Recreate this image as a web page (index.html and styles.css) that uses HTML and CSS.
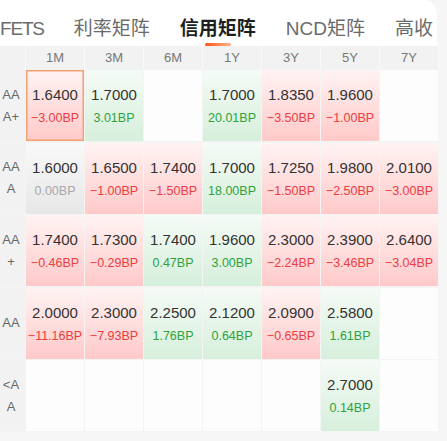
FILE: index.html
```html
<!DOCTYPE html>
<html lang="zh">
<head>
<meta charset="utf-8">
<link rel="stylesheet" href="styles.css">
</head>
<body>
<div class="page">
  <div class="tabs">
    <div class="tab-row">
      <span class="tab latin">FETS</span>
      <span class="tab">利率矩阵</span>
      <span class="tab active">信用矩阵</span>
      <span class="tab">NCD矩阵</span>
      <span class="tab">高收</span>
    </div>
  </div>
  <div class="head">
    <div class="hc"></div>
    <div class="hc">1M</div>
    <div class="hc">3M</div>
    <div class="hc">6M</div>
    <div class="hc">1Y</div>
    <div class="hc">3Y</div>
    <div class="hc">5Y</div>
    <div class="hc">7Y</div>
  </div>
  <div class="grid">
    <div class="lab">AA<br>A+</div>
    <div class="cell down sel"><span class="num">1.6400</span><span class="bp">−3.00BP</span></div>
    <div class="cell up"><span class="num">1.7000</span><span class="bp">3.01BP</span></div>
    <div class="cell empty"></div>
    <div class="cell up"><span class="num">1.7000</span><span class="bp">20.01BP</span></div>
    <div class="cell down"><span class="num">1.8350</span><span class="bp">−3.50BP</span></div>
    <div class="cell down"><span class="num">1.9600</span><span class="bp">−1.00BP</span></div>
    <div class="cell empty"></div>

    <div class="lab">AA<br>A</div>
    <div class="cell flat"><span class="num">1.6000</span><span class="bp">0.00BP</span></div>
    <div class="cell down"><span class="num">1.6500</span><span class="bp">−1.00BP</span></div>
    <div class="cell down"><span class="num">1.7400</span><span class="bp">−1.50BP</span></div>
    <div class="cell up"><span class="num">1.7000</span><span class="bp">18.00BP</span></div>
    <div class="cell down"><span class="num">1.7250</span><span class="bp">−1.50BP</span></div>
    <div class="cell down"><span class="num">1.9800</span><span class="bp">−2.50BP</span></div>
    <div class="cell down"><span class="num">2.0100</span><span class="bp">−3.00BP</span></div>

    <div class="lab">AA<br>+</div>
    <div class="cell down"><span class="num">1.7400</span><span class="bp">−0.46BP</span></div>
    <div class="cell down"><span class="num">1.7300</span><span class="bp">−0.29BP</span></div>
    <div class="cell up"><span class="num">1.7400</span><span class="bp">0.47BP</span></div>
    <div class="cell up"><span class="num">1.9600</span><span class="bp">3.00BP</span></div>
    <div class="cell down"><span class="num">2.3000</span><span class="bp">−2.24BP</span></div>
    <div class="cell down"><span class="num">2.3900</span><span class="bp">−3.46BP</span></div>
    <div class="cell down"><span class="num">2.6400</span><span class="bp">−3.04BP</span></div>

    <div class="lab">AA</div>
    <div class="cell down"><span class="num">2.0000</span><span class="bp">−11.16BP</span></div>
    <div class="cell down"><span class="num">2.3000</span><span class="bp">−7.93BP</span></div>
    <div class="cell up"><span class="num">2.2500</span><span class="bp">1.76BP</span></div>
    <div class="cell up"><span class="num">2.1200</span><span class="bp">0.64BP</span></div>
    <div class="cell down"><span class="num">2.0900</span><span class="bp">−0.65BP</span></div>
    <div class="cell up"><span class="num">2.5800</span><span class="bp">1.61BP</span></div>
    <div class="cell empty"></div>

    <div class="lab">&lt;A<br>A</div>
    <div class="cell empty"></div>
    <div class="cell empty"></div>
    <div class="cell empty"></div>
    <div class="cell empty"></div>
    <div class="cell empty"></div>
    <div class="cell up"><span class="num">2.7000</span><span class="bp">0.14BP</span></div>
    <div class="cell empty"></div>
  </div>
</div>
</body>
</html>
```
FILE: styles.css
```css
* { box-sizing: border-box; }
html, body { margin: 0; padding: 0; }
body {
  background: #f6f6f6;
  font-family: "Liberation Sans", "Noto Sans CJK SC", sans-serif;
  width: 447px;
  height: 441px;
  overflow: hidden;
}
.page { width: 439px; }
.tabs {
  width: 437px;
  height: 46px;
  background: #fff;
  border-top-right-radius: 14px;
  overflow: hidden;
}
.tab-row {
  display: flex;
  gap: 30px;
  padding-top: 11px;
  white-space: nowrap;
}
.tab {
  position: relative;
  font-size: 19px;
  line-height: 35px;
  color: #6b6b6b;
}
.tab.latin { letter-spacing: -1.2px; }
.tab.active {
  color: #1f1f1f;
  font-weight: bold;
}
.tab.active::after {
  content: "";
  position: absolute;
  left: 50%;
  bottom: 0;
  width: 26px;
  height: 3px;
  margin-left: -13px;
  border-radius: 2px;
  background: linear-gradient(90deg, #ff5410, #ffb48c);
}
.head {
  display: grid;
  grid-template-columns: 25px repeat(7, 58px);
  column-gap: 1px;
  background: #f9f9f9;
  height: 24px;
}
.hc {
  background: #f2f2f2;
  font-size: 13px;
  color: #787878;
  line-height: 24px;
  text-align: center;
}
.grid {
  display: grid;
  grid-template-columns: 25px repeat(7, 58px);
  grid-auto-rows: 71px;
  column-gap: 1px;
  row-gap: 1.5px;
  background: #f4f4f4;
  padding-bottom: 1px;
}
.lab {
  background: #f2f2f2;
  color: #666;
  font-size: 13px;
  line-height: 22px;
  display: flex;
  align-items: center;
  justify-content: center;
  text-align: center;
  padding-right: 3px;
}
.cell {
  display: flex;
  flex-direction: column;
  align-items: center;
  padding-top: 16px;
  gap: 6px;
  white-space: nowrap;
}
.num {
  font-size: 15px;
  line-height: 18px;
  color: #333;
}
.bp {
  font-size: 12.5px;
  line-height: 16px;
}
.down { background: linear-gradient(180deg, #fff3f3 0%, #ffc9c9 100%); }
.down .bp { color: #ec3d42; }
.up { background: linear-gradient(180deg, #f5fbf6 0%, #d6efdc 100%); }
.up .bp { color: #2ea33b; }
.flat { background: linear-gradient(180deg, #f9f9f9 0%, #e7e7e7 100%); }
.flat .bp { color: #a8a8a8; }
.empty { background: #fdfdfd; }
.sel { box-shadow: inset 0 0 0 1.5px #f2a271; }
```
